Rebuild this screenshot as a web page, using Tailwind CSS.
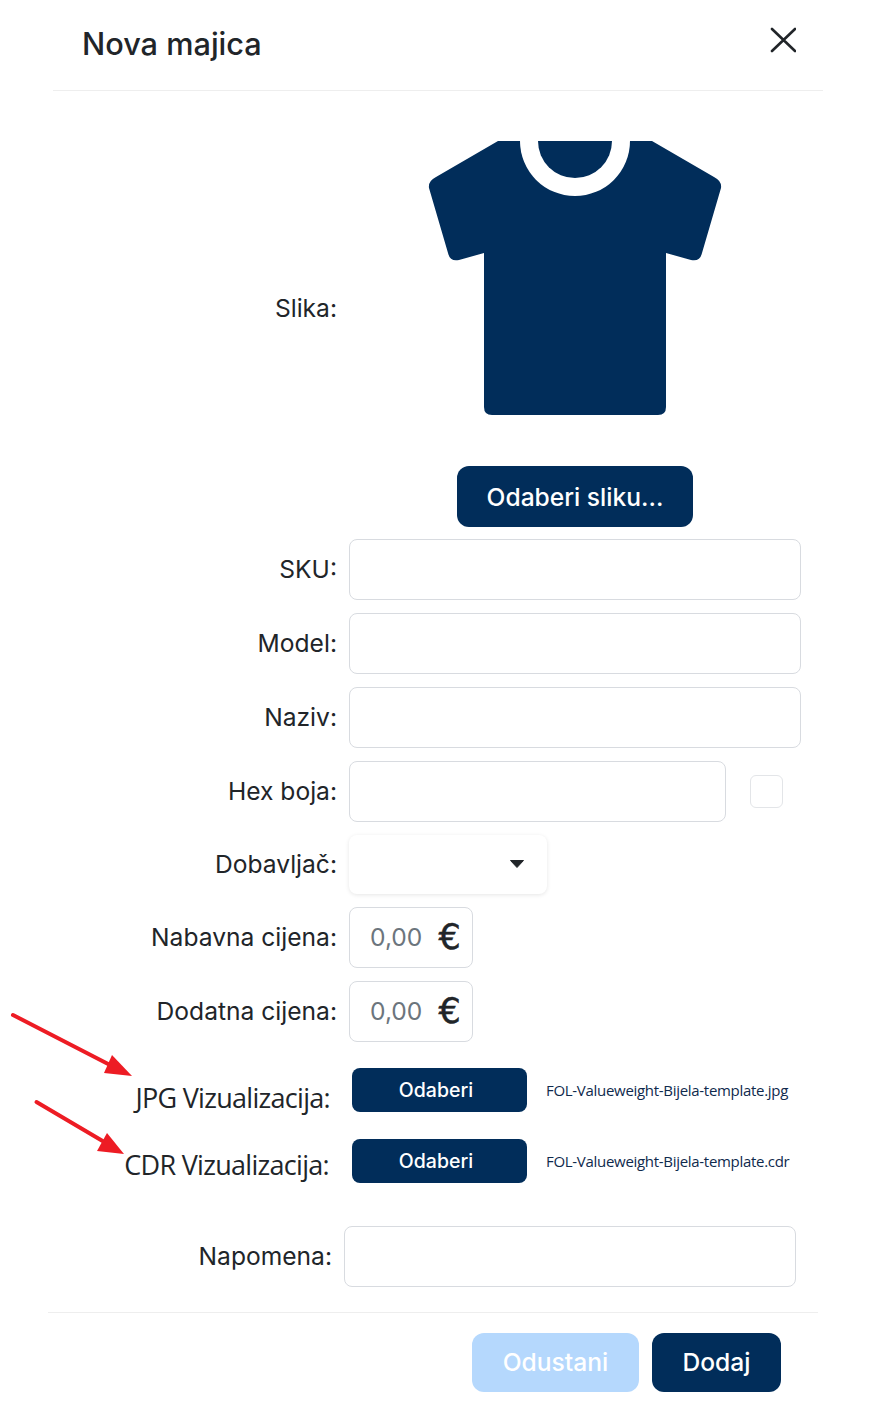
<!DOCTYPE html>
<html lang="en">
<head>
  <meta charset="UTF-8">
  <meta name="viewport" content="width=device-width, initial-scale=1.0">
  <title>Nova majica</title>
  <script src="https://cdn.jsdelivr.net/npm/@tailwindcss/browser@4"></script>
</head>
<body class="bg-white font-['Inter',sans-serif] text-[#212529]">
  <div class="relative w-[877px] h-[1410px] overflow-hidden">

    <!-- header -->
    <div class="ml-[53px] w-[770px] h-[91px] border-b border-[#eeeeee] flex justify-between pl-[29px] pr-[27px]">
      <h1 class="text-[30.7px] font-medium leading-[36px] mt-[26px]">Nova majica</h1>
      <button class="mt-[27px] h-[26px] w-[26px]">
        <svg width="26" height="26" viewBox="0 0 26 26" fill="none" stroke="#212529" stroke-width="2.6" stroke-linecap="round"><path d="M2 2L25 24M25 2L2 24"/></svg>
      </button>
    </div>

    <!-- slika -->
    <div class="flex gap-[12px] mt-[50px]">
      <label class="w-[337px] text-right text-[24.6px] leading-[30px] mt-[152px]">Slika:</label>
      <div class="w-[452px] flex flex-col items-center">
        <svg width="294" height="274" viewBox="-1 0 294 274">
          <path fill="#012d5a" d="M69 0L7 36Q-1 40 0 47L19 112Q21 121 30 119L55 112V266Q55 274 63 274H229Q237 274 237 266V112L262 119Q271 121 273 112L292 47Q293 40 285 36L223 0Z"/>
          <circle cx="146" cy="0" r="55" fill="#fff"/>
          <circle cx="146" cy="0" r="37" fill="#012d5a"/>
        </svg>
        <button class="mt-[51px] w-[236px] h-[61px] rounded-xl bg-[#012d5a] text-white text-[24.6px] font-medium pt-[1px]">Odaberi sliku...</button>
      </div>
    </div>

    <!-- polja -->
    <div class="mt-[12px] flex flex-col gap-[13px]">
      <div class="flex items-center gap-[12px]">
        <label class="w-[337px] text-right text-[24.6px]">SKU:</label>
        <input type="text" class="w-[452px] h-[61px] border border-[#d8dbe0] rounded-lg">
      </div>
      <div class="flex items-center gap-[12px]">
        <label class="w-[337px] text-right text-[24.6px]">Model:</label>
        <input type="text" class="w-[452px] h-[61px] border border-[#d8dbe0] rounded-lg">
      </div>
      <div class="flex items-center gap-[12px]">
        <label class="w-[337px] text-right text-[24.6px]">Naziv:</label>
        <input type="text" class="w-[452px] h-[61px] border border-[#d8dbe0] rounded-lg">
      </div>
      <div class="flex items-center gap-[12px]">
        <label class="w-[337px] text-right text-[24.6px]">Hex boja:</label>
        <input type="text" class="w-[377px] h-[61px] border border-[#d8dbe0] rounded-lg">
        <div class="ml-[12px] w-[33px] h-[33px] border border-[#e3e5e8] rounded-md"></div>
      </div>
      <div class="flex items-center gap-[12px] h-[59px]">
        <label class="w-[337px] text-right text-[24.6px]">Dobavljač:</label>
        <div class="w-[198px] h-[59px] rounded-lg bg-white shadow-[0_1px_4px_rgba(0,0,0,0.1)] flex items-center justify-end pr-[22px] pb-[2px]">
          <svg width="16" height="10" viewBox="0 0 16 10"><path fill="#212529" stroke="#212529" stroke-linejoin="round" d="M1.500 1.500H14.500L8 8.500Z"/></svg>
        </div>
      </div>
      <div class="flex items-center gap-[12px]">
        <label class="w-[337px] text-right text-[24.6px]">Nabavna cijena:</label>
        <div class="w-[124px] h-[61px] border border-[#d8dbe0] rounded-lg flex items-center pl-[20px]">
          <span class="text-[24.6px] text-[#6c757d]">0,00</span>
          <span class="ml-[16px] font-['DejaVu_Sans',sans-serif] text-[35px] leading-none [-webkit-text-stroke:0.5px_#212529]">€</span>
        </div>
      </div>
      <div class="flex items-center gap-[12px]">
        <label class="w-[337px] text-right text-[24.6px]">Dodatna cijena:</label>
        <div class="w-[124px] h-[61px] border border-[#d8dbe0] rounded-lg flex items-center pl-[20px]">
          <span class="text-[24.6px] text-[#6c757d]">0,00</span>
          <span class="ml-[16px] font-['DejaVu_Sans',sans-serif] text-[35px] leading-none [-webkit-text-stroke:0.5px_#212529]">€</span>
        </div>
      </div>
    </div>

    <!-- vizualizacije -->
    <div class="mt-[26px] flex flex-col gap-[27px]">
      <div class="flex items-center h-[44px]">
        <label class="w-[330px] text-right text-[27px] tracking-[-0.7px] font-['Open_Sans',sans-serif] pt-[16px]">JPG Vizualizacija:</label>
        <button class="ml-[22px] w-[175px] h-[44px] rounded-lg bg-[#012d5a] text-white text-[19.5px] font-medium pr-[7px] pt-[2px]">Odaberi</button>
        <span class="ml-[19px] text-[15px] tracking-[-0.3px] font-['Open_Sans',sans-serif] text-[#0f2a4d]">FOL-Valueweight-Bijela-template.jpg</span>
      </div>
      <div class="flex items-center h-[44px]">
        <label class="w-[329px] text-right text-[27px] tracking-[-0.7px] font-['Open_Sans',sans-serif] pt-[8px]">CDR Vizualizacija:</label>
        <button class="ml-[23px] w-[175px] h-[44px] rounded-lg bg-[#012d5a] text-white text-[19.5px] font-medium pr-[7px] pt-[2px]">Odaberi</button>
        <span class="ml-[19px] text-[15px] tracking-[-0.3px] font-['Open_Sans',sans-serif] text-[#0f2a4d]">FOL-Valueweight-Bijela-template.cdr</span>
      </div>
    </div>

    <!-- napomena -->
    <div class="mt-[43px] flex items-center gap-[12px]">
      <label class="w-[332px] text-right text-[24.6px]">Napomena:</label>
      <input type="text" class="w-[452px] h-[61px] border border-[#d8dbe0] rounded-lg">
    </div>

    <!-- footer -->
    <div class="mt-[25px] ml-[48px] w-[770px] border-t border-[#eeeeee] pt-[20px] pr-[37px] flex justify-end gap-[13px]">
      <button class="w-[167px] h-[59px] rounded-xl bg-[#b5d8fd] text-white text-[24.6px] font-medium">Odustani</button>
      <button class="w-[129px] h-[59px] rounded-xl bg-[#012d5a] text-white text-[24.6px] font-medium">Dodaj</button>
    </div>

    <!-- strelice -->
    <svg class="absolute left-0 top-[1000px]" width="140" height="170" viewBox="0 0 140 170">
      <path d="M13 15L112 66" stroke="#ed1c24" stroke-width="4" stroke-linecap="round"/>
      <path fill="#ed1c24" d="M132 76L112 55L104 73Z"/>
      <path d="M36.500 102L106 143" stroke="#ed1c24" stroke-width="4" stroke-linecap="round"/>
      <path fill="#ed1c24" d="M124 154L107 133L97 151Z"/>
    </svg>
  </div>
</body>
</html>
